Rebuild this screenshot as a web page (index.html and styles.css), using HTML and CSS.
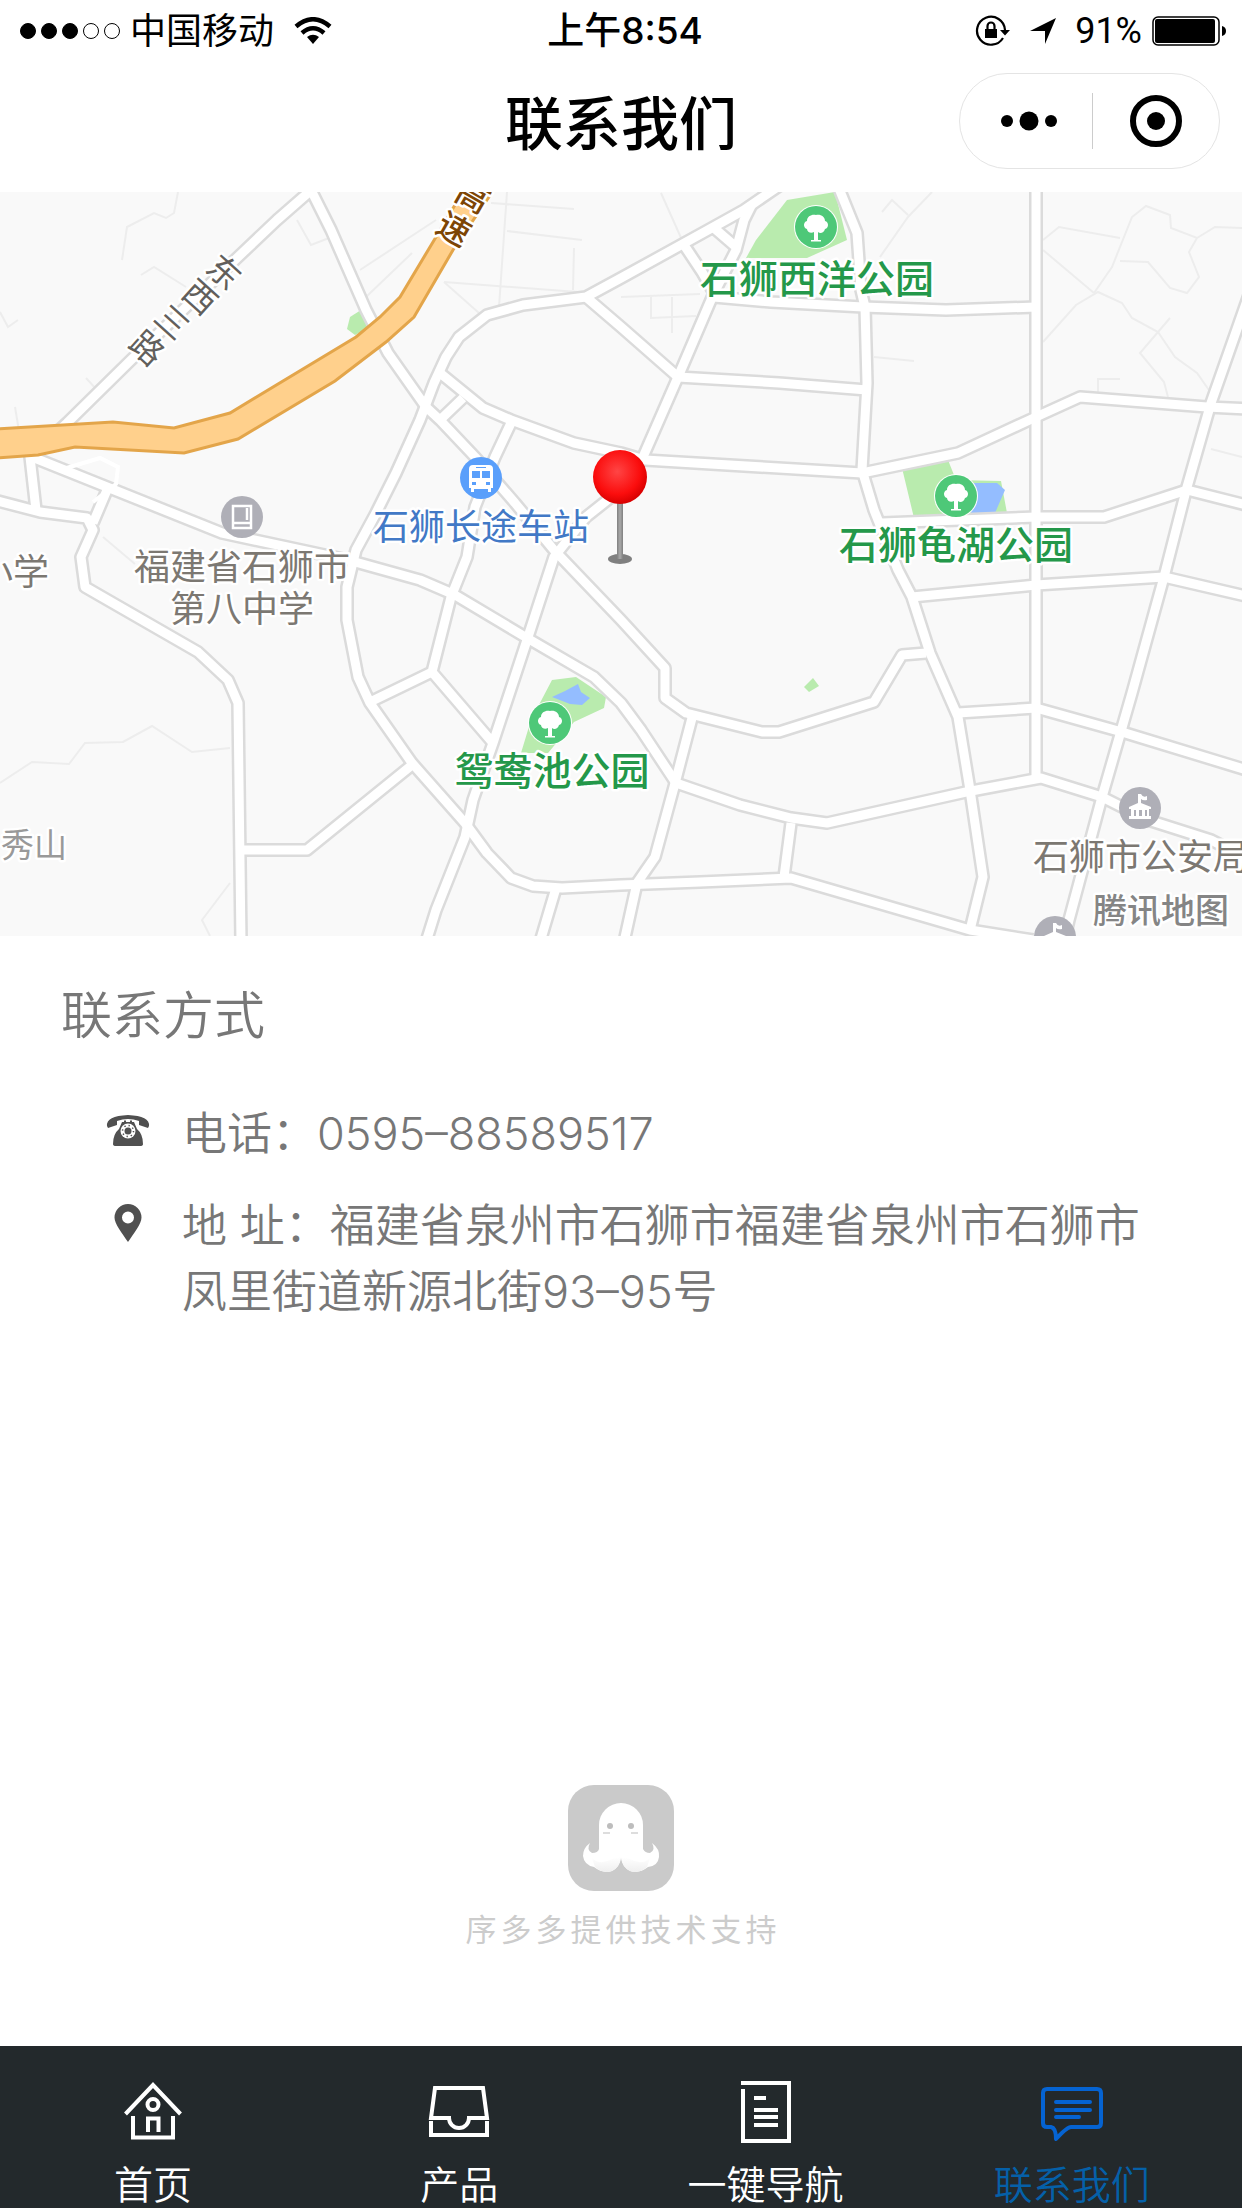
FILE: index.html
```html
<!DOCTYPE html>
<html lang="zh-CN">
<head>
  <meta charset="UTF-8">
  <meta name="viewport" content="width=device-width, initial-scale=1">
  <title>联系我们</title>
  <link rel="stylesheet" href="styles.css">
</head>
<body>

<div class="status-bar">
  <div class="status-left">
    <div class="signal">
      <i class="dot full"></i><i class="dot full"></i><i class="dot full"></i><i class="dot"></i><i class="dot"></i>
    </div>
    <span>中国移动</span>
    <svg class="wifi" width="38" height="28" viewBox="0 0 38 28">
      <path d="M2 9.5Q19-5 36 9.5M8 16Q19 6.5 30 16" fill="none" stroke="#000" stroke-width="4.5"/>
      <path d="M13 20Q19 15.5 25 20L19 27z"/>
    </svg>
  </div>
  <div class="status-time">上午8:54</div>
  <div class="status-right">
    <svg width="36" height="32" viewBox="0 0 36 32">
      <path d="M28 23A14 14 0 1 1 30 15" fill="none" stroke="#000" stroke-width="2.2"/>
      <path d="M25 15h10l-5 5.5zM10 14h12v9H10z"/>
      <path d="M12.5 14v-3a3.5 3.5 0 0 1 7 0v3" fill="none" stroke="#000" stroke-width="2.2"/>
    </svg>
    <svg width="28" height="28" viewBox="0 0 28 28"><path d="M27 1L16 27V14H1z"/></svg>
    <span class="percent">91%</span>
    <svg class="battery" width="74" height="30" viewBox="0 0 74 30">
      <rect x="1" y="1" width="66" height="28" rx="5" fill="none" stroke="#000" stroke-width="1.5"/>
      <rect x="3" y="3" width="60" height="24" rx="2"/>
      <path d="M70 10q4 1 4 5t-4 5z"/>
    </svg>
  </div>
</div>

<header class="nav-bar">
  <h1>联系我们</h1>
  <div class="capsule">
    <button type="button" aria-label="更多">
      <svg width="58" height="20" viewBox="0 0 58 20"><circle cx="7" cy="10" r="6"/><circle cx="29" cy="10" r="9.5"/><circle cx="51" cy="10" r="6"/></svg>
    </button>
    <button type="button" aria-label="关闭">
      <svg width="54" height="54" viewBox="0 0 54 54"><circle cx="27" cy="27" r="23" fill="none" stroke="#000" stroke-width="6"/><circle cx="27" cy="27" r="9"/></svg>
    </button>
  </div>
</header>

<main>
  <svg class="map" viewBox="0 0 1242 744" preserveAspectRatio="xMidYMid slice" role="img" aria-label="地图">
    <defs>
      <radialGradient id="pin-red" cx="45%" cy="40%" r="60%">
        <stop offset="0" stop-color="#ff4545"/>
        <stop offset="0.7" stop-color="#fb0d0d"/>
        <stop offset="1" stop-color="#d80000"/>
      </radialGradient>
      <linearGradient id="stem" x1="0" x2="1">
        <stop offset="0" stop-color="#808080"/>
        <stop offset="0.5" stop-color="#aaa"/>
        <stop offset="1" stop-color="#808080"/>
      </linearGradient>
      <g id="roads">
        <path d="M309 0L277 28 238 65 131 168 67 231 30 265 36 318"/>
        <path d="M309-6L331 38 366 118 388 161 426 215 440 228 475 265 515 311 554 358 621 428 665 476 665 506 686 521 762 540 779 540 874 510 902 463 926 461"/>
        <path d="M779-6L744 18 708 38 621 86 586 105 523 113 487 123 459 145 446 165 434 191 420 228 396 281 376 321 356 358 347 395 347 428 358 485 370 511 412 571 465 631 487 661 511 686 533 694 562 696 621 693 700 690 791 686 970 738 1033 748"/>
        <path d="M586 105L621 135 678 185 779 191 867 198"/>
        <path d="M752 12L744 28 736 58 714 101 678 185 643 265"/>
        <path d="M684 53L702 80 714 101M714 36L736 55"/>
        <path d="M714 105L771 110 863 115 946 118 1036 115"/>
        <path d="M1036-6V586"/>
        <path d="M838-6L857 41 861 98 865 115 867 191 862 278 874 318 898 378 912 405 930 461 958 525 970 598 983 685 970 738"/>
        <path d="M440 181L483 216 511 228 574 251 621 261 645 268 862 281 958 261 1036 225 1080 205 1207 215 1250 217"/>
        <path d="M463 206L440 228M511 231L495 265 475 315 467 365 451 405 432 480 370 510M432 480L493 551"/>
        <path d="M620 298L586 325 554 365 527 448 493 551 473 608 465 645 436 718 426 750"/>
        <path d="M32 265L107 295 222 341 348 368 420 388 455 403 527 446 594 485 621 511 641 538 676 591 740 613 791 626 827 631 966 600 1041 586 1102 605 1148 628 1211 648 1250 668"/>
        <path d="M-6 308L40 320 87 326 93 338 81 365 85 395 198 460 228 488 238 511 241 750M107 298L93 331"/>
        <path d="M240 658H307L412 573"/>
        <path d="M692 526L674 595 655 665 637 691 624 750M556 696L540 750M791 631L784 685"/>
        <path d="M912 405L1036 393 1164 385 1250 405M958 521L1036 516 1122 540 1250 579"/>
        <path d="M1250 100L1211 211 1187 295 1164 385 1132 501 1102 605 1069 728 1064 750"/>
        <path d="M882 331L1036 325H1104L1187 298 1250 314"/>
      </g>
      <g id="tree">
        <circle r="22" fill="#fff"/>
        <circle r="21" fill="#4ec878"/>
        <path d="M-2 13V5C-5 7-9 5-9 2-13 1-13-5-9-6-9-11-4-13 0-12 5-13 9-10 9-6 13-5 13 1 9 2 8 6 4 7 2 5V13H5V14.5H-5V13z" fill="#fff"/>
      </g>
      <g id="office">
        <circle r="21" fill="#afafb7"/>
        <path d="M-11-1L-2-5V-14H1Q3-10 7-12V-8Q3-7 1-9V-5L11-1V1H9V8H11V11H-11V8H-9V1H-11zM-6 2V8H-4V2zM-1 2V8H2V2zM5 2V8H7V2z" fill="#fff" fill-rule="evenodd"/>
      </g>
    </defs>

    <rect class="ground" width="1242" height="744"/>

    <g class="lanes">
      <path d="M178 0L174 21 166 26 154 21 127 35 122 68M141 83L154 75 186 95M0 120L8 135 18 128M297 28L311 53 329 46M15 215L20 245M86 186L97 198"/>
      <path d="M507 0L499 115M491 11L574 17M507 39L582 48M574 56L573 98M444 90L578 100M360 78L436 28M444 90L479 121M366 105L412 61"/>
      <path d="M661 1L682 48M621 105L700 102M651 105V126L696 124M672 105V141M932 0L908 25 880 65M882 20L892 8 908 23M874 165L914 169"/>
      <path d="M1043 58L1094 101M1043 48L1059 35 1120 46M1094 101L1112 75 1132 25 1146 14 1170 23 1171 36 1197 46 1215 35 1242 36M1120 69L1148 70 1170 96 1187 101 1199 85 1189 60 1197 46"/>
      <path d="M1043 150L1076 113 1098 100 1122 111 1132 126 1158 140 1175 165 1197 181 1211 201M1170 126L1140 161 1164 190 1168 205M1211 257L1242 265M1098 200V187H1120"/>
      <path d="M0 591L32 570 69 572 85 551 123 550 152 534 192 560 230 556M230 691L202 728 210 744M103 345L135 372"/>
    </g>

    <g class="parks">
      <path d="M347 137L350 125 361 118 370 135 355 143z"/>
      <path d="M787 8L835 0 847 48 807 66H746L756 48z"/>
      <path d="M902 276L948 268 956 288 1001 289 1007 321 914 326z"/>
      <path d="M552 488L576 485 606 505 604 516 574 530 548 561H521L531 528z"/>
      <path d="M813 486L819 494 809 500 804 495z"/>
    </g>
    <path class="water" d="M973 291H997L1005 298 995 321H971zM552 505L565 499 578 492 581 500 590 506 582 513 570 512z"/>

    <use href="#roads" class="road-edge"/>
    <use href="#roads" class="road-fill"/>
    <path d="M60 278L100 266 118 275 116 292 93 310" fill="none" stroke="#fff" stroke-width="4"/>

    <path class="highway" d="M-4 237L113 230 174 236 230 221 356 145 380 125 400 105 436 45 465-4H495L453 58 414 125 386 150 335 189 238 247 184 261 75 255 38 263-4 266z"/>

    <use href="#tree" x="816" y="35"/>
    <use href="#tree" x="956" y="304"/>
    <use href="#tree" x="550" y="531"/>
    <use href="#office" x="1140" y="616"/>
    <use href="#office" x="1055" y="745"/>

    <!-- bus station -->
    <g transform="translate(481 286)">
      <circle r="21" fill="#5a9ffb"/>
      <path d="M-12-9Q-12-13-8-13H8Q12-13 12-9V10H10V14H7V11H-7V14H-10V10H-12z" fill="#fff"/>
      <path d="M-9-7H-1V0H-9zM1-7H9V0H1zM-5-11H5V-10H-5zM-9 4H-5V7H-9zM5 4H9V7H5z" fill="#5a9ffb"/>
    </g>

    <!-- school -->
    <g transform="translate(242 325)">
      <circle r="21" fill="#afafb7"/>
      <path d="M-9-11H9V11H-9zM-9 6H9M5-9V3" fill="none" stroke="#fff" stroke-width="2.5"/>
    </g>

    <g class="label park">
      <text x="817" y="101">石狮西洋公园</text>
      <text x="956" y="367">石狮龟湖公园</text>
      <text x="552" y="593">鸳鸯池公园</text>
    </g>
    <g class="label place">
      <text class="station" x="481" y="348">石狮长途车站</text>
      <text x="242" y="388">福建省石狮市</text>
      <text x="242" y="430">第八中学</text>
      <text x="13" y="393">小学</text>
      <text x="1141" y="678">石狮市公安局</text>
    </g>
    <g class="label small">
      <text class="hill" x="34" y="665">秀山</text>
      <text class="brand" x="1161" y="731">腾讯地图</text>
      <g class="street">
        <text transform="translate(224 80) rotate(42)" y="12">东</text>
        <text transform="translate(200 105) rotate(42)" y="12">西</text>
        <text transform="translate(172 130) rotate(42)" y="12">三</text>
        <text transform="translate(147 156) rotate(42)" y="12">路</text>
      </g>
      <g class="expressway">
        <text transform="translate(473 4) rotate(30)" y="12">高</text>
        <text transform="translate(454 37) rotate(30)" y="12">速</text>
      </g>
    </g>

    <!-- pin -->
    <ellipse cx="620" cy="367" rx="12" ry="5" fill="#808080"/>
    <rect x="617" y="308" width="6" height="59" fill="url(#stem)"/>
    <circle cx="620" cy="285" r="27" fill="url(#pin-red)"/>
  </svg>

  <section class="contact">
    <h2>联系方式</h2>
    <ul>
      <li>
        <svg viewBox="0 0 44 44" width="44" height="44">
          <path d="M1 17Q0 7 22 6Q44 7 43 17L42 19 33 16V12Q22 8 11 12V16L2 19z"/>
          <path d="M16 13H18V11.5H20V13H24V11.5H26V13H28L31 20Q37 25 37 35Q37 37 34 37H10Q7 37 7 35Q7 25 13 20z"/>
          <circle cx="22" cy="22" r="7.5" fill="#fff"/>
          <circle cx="22" cy="22" r="3.5"/>
          <circle cx="22" cy="22" r="5.5" fill="none" stroke="#505050" stroke-width="1.5" stroke-dasharray="1.3 3"/>
        </svg>
        <p>电话：<a href="tel:0595-88589517">0595–88589517</a></p>
      </li>
      <li>
        <svg viewBox="0 0 44 44" width="44" height="44">
          <path fill-rule="evenodd" d="M22 3A13.500 13.500 0 0 1 35.500 16.500C35.500 23 28 32 22 41C16 32 8.500 23 8.500 16.500A13.500 13.500 0 0 1 22 3zM22 10.500A6 6 0 1 0 22 22.500A6 6 0 1 0 22 10.500z"/>
        </svg>
        <p>地 址：福建省泉州市石狮市福建省泉州市石狮市凤里街道新源北街93–95号</p>
      </li>
    </ul>
  </section>
</main>

<footer class="support">
  <svg width="106" height="106" viewBox="0 0 106 106">
    <defs>
      <linearGradient id="arm" x1="0" y1="0" x2="0" y2="1">
        <stop offset="0" stop-color="#fff"/>
        <stop offset="1" stop-color="#efefef"/>
      </linearGradient>
    </defs>
    <rect width="106" height="106" rx="26" fill="#cacaca"/>
    <path d="M31 40A22 22 0 0 1 75 40V64Q77 68 82 68Q88 65 84 58Q92 64 91 72Q90 81 80 82Q71 89 62 86Q54 82 53 72Q52 82 44 86Q35 89 26 82Q16 80 15 71Q15 63 22 58Q18 65 24 68Q30 68 31 64z" fill="#fff"/>
    <path d="M24 73Q32 81 44 74Q50 72 53 72Q52 82 44 86Q35 89 27 82zM82 73Q74 81 62 74Q56 72 53 72Q54 82 62 86Q71 89 79 82z" fill="url(#arm)"/>
    <circle cx="42" cy="41" r="3" fill="#bdbdbd"/>
    <circle cx="63" cy="41" r="3" fill="#bdbdbd"/>
    <path d="M35 48H42M63 48H70" stroke="#ddd" stroke-width="2"/>
  </svg>
  <p>序多多提供技术支持</p>
</footer>

<nav class="tab-bar">
  <a href="#home">
    <svg width="66" height="66" viewBox="0 0 66 66">
      <path d="M5.500 35L33 6 60.500 35"/>
      <circle cx="33" cy="25.500" r="5.500"/>
      <path d="M13 37V58.500H53V37"/>
      <path d="M28 53V39.500H38.500V53"/>
    </svg>
    <span>首页</span>
  </a>
  <a href="#products">
    <svg width="66" height="66" viewBox="0 0 66 66">
      <path d="M9 9H57L61 39H43A10 10 0 0 1 23 39H5z"/>
      <path d="M5 42V56H61V42"/>
    </svg>
    <span>产品</span>
  </a>
  <a href="#navigate">
    <svg width="66" height="66" viewBox="0 0 66 66">
      <path d="M8 4H56V62H10V10"/>
      <path d="M21 19H33M21 31H45M21 38H45M21 46H45"/>
    </svg>
    <span>一键导航</span>
  </a>
  <a class="active" href="#contact">
    <svg width="66" height="66" viewBox="0 0 66 66">
      <path d="M8 10H58Q62 10 62 14V44Q62 48 58 48H32Q28 48 17 60Q17 49 12 48H8Q4 48 4 44V14Q4 10 8 10z"/>
      <path d="M17 23H51M17 31H51M17 38H40"/>
    </svg>
    <span>联系我们</span>
  </a>
</nav>

</body>
</html>
```

FILE: styles.css
```css
* {
  box-sizing: border-box;
}

body {
  margin: 0;
  min-height: 100vh;
  display: flex;
  flex-direction: column;
  background: #fff;
  color: #000;
  font-family: Inter, "Noto Sans CJK SC", sans-serif;
}

h1, h2, p, ul {
  margin: 0;
  padding: 0;
}

svg {
  display: block;
  flex: none;
}

/* status bar */
.status-bar {
  display: grid;
  grid-template-columns: 1fr auto 1fr;
  align-items: center;
  height: 62px;
  padding: 0 16px 0 20px;
  font-size: 36px;
  line-height: 62px;
}

.status-left,
.status-right {
  display: flex;
  align-items: center;
}

.status-left {
  gap: 10px;
}

.signal {
  display: flex;
  gap: 5px;
}

.dot {
  width: 16px;
  height: 16px;
  border: 1px solid #000;
  border-radius: 50%;
}

.dot.full {
  background: #000;
}

.wifi {
  margin-left: 10px;
}

.status-time {
  padding-left: 4px;
  font-size: 37px;
  font-weight: 500;
}

.status-right {
  justify-content: flex-end;
  gap: 18px;
}

.percent {
  font-family: Roboto, sans-serif;
}

.battery {
  margin-left: -8px;
}

/* title bar */
.nav-bar {
  display: grid;
  grid-template-columns: 1fr auto 1fr;
  align-items: center;
  height: 130px;
  padding: 0 22px 12px;
}

.nav-bar h1 {
  grid-column: 2;
  padding-top: 6px;
  font-size: 58px;
  font-weight: 500;
  line-height: 84px;
}

.capsule {
  justify-self: end;
  display: flex;
  align-items: center;
  width: 261px;
  height: 96px;
  border: 1px solid #e4e4e4;
  border-radius: 48px;
}

.capsule button {
  flex: 1;
  display: flex;
  align-items: center;
  justify-content: center;
  height: 56px;
  padding: 0;
  border: none;
  background: none;
  cursor: pointer;
}

.capsule button:first-child {
  padding-left: 6px;
  border-right: 1px solid #ccc;
}

/* map */
.map {
  width: 100%;
  height: 744px;
}

.ground {
  fill: #f9f9f9;
}

.lanes {
  fill: none;
  stroke: #ededed;
  stroke-width: 2;
}

.parks {
  fill: #b9ebae;
}

.water {
  fill: #94bdff;
}

.road-edge,
.road-fill {
  fill: none;
  stroke-linejoin: round;
}

.road-edge {
  stroke: #dbdbdb;
  stroke-width: 14px;
}

.road-fill {
  stroke: #fff;
  stroke-width: 9px;
}

.highway {
  fill: #ffd08c;
  stroke: #e3a54a;
  stroke-width: 3px;
}

.label {
  text-anchor: middle;
  paint-order: stroke;
  stroke: #fff;
  stroke-width: 5px;
  stroke-linejoin: round;
}

.park {
  fill: #24984a;
  font-size: 39px;
  font-weight: 500;
}

.place {
  fill: #7c7872;
  font-size: 36px;
}

.station {
  fill: #4279c6;
}

.small {
  font-size: 33px;
}

.hill {
  fill: #999;
}

.brand {
  fill: #858585;
  font-size: 34px;
  font-weight: 500;
}

.street {
  fill: #625f5c;
}

.expressway {
  fill: #7d4505;
  font-weight: 500;
}

/* contact details */
.contact {
  padding: 42px 61px;
  color: #777;
}

.contact h2 {
  font-size: 51px;
  font-weight: 350;
  line-height: 76px;
}

.contact ul {
  margin-top: 47px;
  padding-left: 45px;
  list-style: none;
}

.contact li {
  display: flex;
  gap: 32px;
  margin-bottom: 26px;
}

.contact li svg {
  margin-top: 8px;
  fill: #505050;
}

.contact p {
  flex: 1;
  font-size: 45px;
  font-weight: 350;
  line-height: 66px;
}

.contact a {
  color: inherit;
  text-decoration: none;
}

/* technical support */
.support {
  display: flex;
  flex-direction: column;
  align-items: center;
  gap: 17px;
  margin-top: auto;
  padding-bottom: 94px;
  color: #ccc;
}

.support p {
  padding-left: 4px;
  font-size: 31px;
  line-height: 44px;
  letter-spacing: 4px;
}

/* tab bar */
.tab-bar {
  display: flex;
  height: 162px;
  padding: 33px 17px 0 0;
  background: #23292c;
}

.tab-bar a {
  flex: 1;
  display: flex;
  flex-direction: column;
  align-items: center;
  gap: 17px;
  color: #fff;
  font-size: 39px;
  font-weight: 350;
  line-height: 46px;
  text-decoration: none;
}

.tab-bar svg {
  fill: none;
  stroke: #fff;
  stroke-width: 4px;
}

.tab-bar .active {
  color: #0560a8;
}

.tab-bar .active svg {
  stroke: #0563d2;
  stroke-linecap: round;
  stroke-linejoin: round;
}
```
